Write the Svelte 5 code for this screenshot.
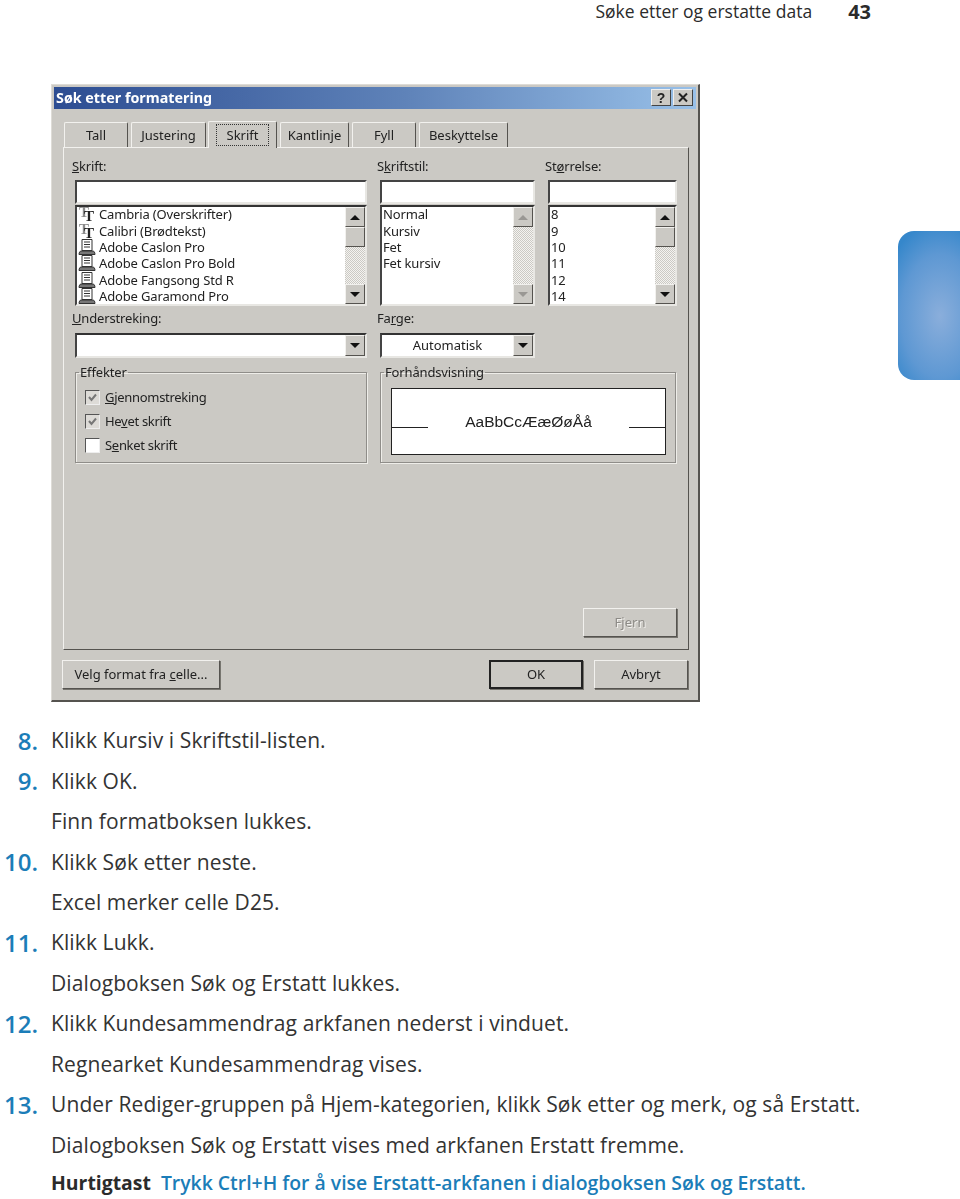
<script>
	const tabs = [
		{ label: 'Tall', width: 64 },
		{ label: 'Justering', width: 75 },
		{ label: 'Skrift', width: 69 },
		{ label: 'Kantlinje', width: 69 },
		{ label: 'Fyll', width: 64 },
		{ label: 'Beskyttelse', width: 89 }
	];
	const fonts = [
		{ name: 'Cambria (Overskrifter)', tt: true },
		{ name: 'Calibri (Brødtekst)', tt: true },
		{ name: 'Adobe Caslon Pro' },
		{ name: 'Adobe Caslon Pro Bold' },
		{ name: 'Adobe Fangsong Std R' },
		{ name: 'Adobe Garamond Pro' }
	];
	const styles = ['Normal', 'Kursiv', 'Fet', 'Fet kursiv'];
	const sizes = ['8', '9', '10', '11', '12', '14'];
	const effects = [
		{ before: '', key: 'G', after: 'jennomstreking', on: true },
		{ before: 'He', key: 'v', after: 'et skrift', on: true },
		{ before: 'S', key: 'e', after: 'nket skrift', on: false }
	];
	const steps = [
		{ n: '8.', text: 'Klikk Kursiv i Skriftstil-listen.' },
		{ n: '9.', text: 'Klikk OK.' },
		{ text: 'Finn formatboksen lukkes.' },
		{ n: '10.', text: 'Klikk Søk etter neste.' },
		{ text: 'Excel merker celle D25.' },
		{ n: '11.', text: 'Klikk Lukk.' },
		{ text: 'Dialogboksen Søk og Erstatt lukkes.' },
		{ n: '12.', text: 'Klikk Kundesammendrag arkfanen nederst i vinduet.' },
		{ text: 'Regnearket Kundesammendrag vises.' },
		{ n: '13.', text: 'Under Rediger-gruppen på Hjem-kategorien, klikk Søk etter og merk, og så Erstatt.' },
		{ text: 'Dialogboksen Søk og Erstatt vises med arkfanen Erstatt fremme.' }
	];
</script>

{#snippet scrollbar(disabled)}
	<div class="scrollbar" class:disabled>
		<div class="sb-btn"><span class="arrow up"></span></div>
		{#if !disabled}<div class="sb-btn thumb"></div>{/if}
		<div class="track"></div>
		<div class="sb-btn"><span class="arrow down"></span></div>
	</div>
{/snippet}

<div class="page">
	<header>
		<span class="running">Søke etter og erstatte data</span>
		<span class="folio">43</span>
	</header>

	<div class="side-tab"></div>

	<div class="dialog">
		<div class="titlebar">
			<span>Søk etter formatering</span>
			<div class="caption">
				<div class="cap-btn help">?</div>
				<div class="cap-btn close">
					<svg width="12" height="11" viewBox="0 0 12 11"><path d="M2 1.5l8 8M10 1.5l-8 8" stroke="#222" stroke-width="2" fill="none" /></svg>
				</div>
			</div>
		</div>

		<div class="tabs">
			{#each tabs as tab}
				<div class="tab" class:active={tab.label === 'Skrift'} style="width: {tab.width}px">
					{#if tab.label === 'Skrift'}<span class="focus">{tab.label}</span>{:else}{tab.label}{/if}
				</div>
			{/each}
		</div>

		<div class="panel">
			<div class="fields">
				<div class="col">
					<div class="label"><u>S</u>krift:</div>
					<div class="input"></div>
					<div class="list">
						<div class="rows">
							{#each fonts as f}
								<div class="row">
									{#if f.tt}
										<svg class="ficon" width="18" height="16" viewBox="0 0 18 16">
											<text x="1" y="11" font-family="Liberation Serif" font-size="15" font-weight="bold" fill="#8c8c8c">T</text>
											<text x="6" y="15" font-family="Liberation Serif" font-size="15" font-weight="bold" fill="#222">T</text>
										</svg>
									{:else}
										<svg class="ficon" width="18" height="16" viewBox="0 0 18 16" fill="none" stroke="#333">
											<path d="M4 .5h10v11H4zM6 3h6M6 5.500h6M6 8h6" />
											<path d="M1 15.500c0-2 1-3.500 2-3.500h12c1 0 2 1.500 2 3.500z" fill="#777" />
										</svg>
									{/if}
									{f.name}
								</div>
							{/each}
						</div>
						{@render scrollbar(false)}
					</div>
				</div>
				<div class="col">
					<div class="label">S<u>k</u>riftstil:</div>
					<div class="input"></div>
					<div class="list">
						<div class="rows plain">
							{#each styles as s}<div class="row">{s}</div>{/each}
						</div>
						{@render scrollbar(true)}
					</div>
				</div>
				<div class="col">
					<div class="label">St<u>ø</u>rrelse:</div>
					<div class="input"></div>
					<div class="list">
						<div class="rows plain">
							{#each sizes as s}<div class="row">{s}</div>{/each}
						</div>
						{@render scrollbar(false)}
					</div>
				</div>
			</div>

			<div class="lower">
				<div class="col">
					<div class="label"><u>U</u>nderstreking:</div>
					<div class="combo">
						<div class="combo-value"></div>
						<div class="sb-btn"><span class="arrow down"></span></div>
					</div>
				</div>
				<div class="col">
					<div class="label">Fa<u>r</u>ge:</div>
					<div class="combo">
						<div class="combo-value">Automatisk</div>
						<div class="sb-btn"><span class="arrow down"></span></div>
					</div>
				</div>
			</div>

			<div class="groups">
				<fieldset class="effects">
					<legend>Effekter</legend>
					<div class="checks">
						{#each effects as e}
							<div class="check">
								<span class="box" class:on={e.on}>
									{#if e.on}
										<svg width="13" height="13" viewBox="0 0 13 13"><path d="M3 6l2.500 3L10 3.500" stroke="#777" stroke-width="2" fill="none" /></svg>
									{/if}
								</span>
								<span>{e.before}<u>{e.key}</u>{e.after}</span>
							</div>
						{/each}
					</div>
				</fieldset>
				<fieldset class="preview">
					<legend>Forhåndsvisning</legend>
					<div class="sample">
						<span class="rule"></span>
						<span class="sample-text">AaBbCcÆæØøÅå</span>
						<span class="rule"></span>
					</div>
				</fieldset>
			</div>

			<div class="panel-foot">
				<div class="btn dim">Fjern</div>
			</div>
		</div>

		<div class="footer">
			<div class="btn pick"><span>Velg format fra <u>c</u>elle...</span></div>
			<div class="right-btns">
				<div class="btn default">OK</div>
				<div class="btn">Avbryt</div>
			</div>
		</div>
	</div>

	<ol class="steps">
		{#each steps as s}
			<li>
				<span class="num">{s.n ?? ''}</span>
				<span>{s.text}</span>
			</li>
		{/each}
		<li class="tip">
			<span class="num"></span>
			<span><b>Hurtigtast</b><span class="tip-text">Trykk Ctrl+H for å vise Erstatt-arkfanen i dialogboksen Søk og Erstatt.</span></span>
		</li>
	</ol>
</div>

<style>
	:global(body) {
		background: #fff;
	}

	.page {
		position: relative;
		width: 960px;
		height: 1199px;
		overflow: hidden;
		font-family: "Open Sans", "Noto Sans", sans-serif;
		color: #2b2b2b;
	}

	header {
		display: flex;
		justify-content: flex-end;
		align-items: center;
		height: 23px;
		line-height: 23px;
		padding-right: 89px;
		font-size: 17.500px;
	}

	.folio {
		margin-left: 36px;
		font-size: 20px;
		font-weight: 700;
	}

	.side-tab {
		position: absolute;
		top: 231px;
		right: 0;
		width: 62px;
		height: 149px;
		border-radius: 16px 0 0 16px;
		background: radial-gradient(ellipse 60px 95px at 42px 85px, #8aaedb, #5e98d3 65%, #3587cb);
	}

	.dialog {
		box-sizing: border-box;
		width: 649px;
		height: 618px;
		margin: 61px 0 0 51px;
		padding: 2px 2px 0;
		background: #cbc9c4;
		border: 1px solid #dedcd7;
		border-right: 2px solid #55534f;
		border-bottom: 2px solid #55534f;
		font-family: "Noto Sans", sans-serif;
		font-size: 13px;
		color: #222;
		filter: blur(0.4px);
	}

	.titlebar {
		display: flex;
		justify-content: space-between;
		align-items: center;
		box-sizing: border-box;
		height: 22px;
		padding: 0 3px 1px 2px;
		background: linear-gradient(90deg, #2d4d92, #5f83b9 55%, #98c0e8);
		color: #fff;
		font-size: 14.300px;
		font-weight: 700;
	}

	.caption {
		display: flex;
		gap: 2px;
	}

	.cap-btn {
		display: flex;
		align-items: center;
		justify-content: center;
		box-sizing: border-box;
		width: 20px;
		height: 17px;
		background: #cbc9c4;
		border: 1px solid;
		border-color: #eee #444 #444 #eee;
		color: #222;
	}

	.help {
		font-family: "Liberation Sans", sans-serif;
		font-weight: 700;
		font-size: 14px;
	}

	.tabs {
		display: flex;
		align-items: flex-end;
		gap: 3px;
		box-sizing: border-box;
		height: 38px;
		padding-left: 10px;
	}

	.tab {
		display: flex;
		align-items: center;
		justify-content: center;
		box-sizing: border-box;
		height: 25px;
		background: #cbc9c4;
		border: 1px solid;
		border-color: #f2f1ee #55534f transparent #f2f1ee;
		border-bottom: 0;
		border-radius: 2px 2px 0 0;
	}

	.tab.active {
		height: 27px;
		margin-left: -1px;
		margin-bottom: -1px;
		position: relative;
		z-index: 1;
	}

	.focus {
		padding: 1px 10px;
		outline: 1px dotted #333;
	}

	.panel {
		box-sizing: border-box;
		width: 626px;
		height: 503px;
		margin-left: 9px;
		padding: 11px 11px 0;
		border: 1px solid;
		border-color: #f2f1ee #55534f #55534f #f2f1ee;
		display: flex;
		flex-direction: column;
	}

	.fields,
	.lower,
	.groups {
		display: grid;
		grid-template-columns: 292px 155px 129px;
		column-gap: 13px;
	}

	.lower {
		grid-template-columns: 292px 155px;
		margin-top: 5px;
	}

	.groups {
		grid-template-columns: 292px 296px;
		margin-top: 7px;
	}

	.label {
		height: 21px;
		margin-left: -3px;
		line-height: 15px;
		letter-spacing: -0.15px;
	}

	.lower .label {
		height: 22px;
	}

	.input {
		box-sizing: border-box;
		height: 24px;
		background: #fff;
		border: 2px solid;
		border-color: #444 #e8e7e3 #e8e7e3 #444;
	}

	.list {
		display: flex;
		box-sizing: border-box;
		height: 101px;
		margin-top: 1px;
		background: #fff;
		border: 2px solid;
		border-color: #333 #e8e7e3 #e8e7e3 #444;
		overflow: hidden;
	}

	.rows {
		flex: 1;
		margin-top: -1px;
		padding-left: 1px;
		letter-spacing: -0.15px;
	}

	.row {
		display: flex;
		align-items: center;
		gap: 3px;
		height: 16.400px;
		white-space: nowrap;
	}

	.ficon {
		overflow: visible;
	}

	.scrollbar {
		display: flex;
		flex-direction: column;
		width: 20px;
		flex: none;
		background: conic-gradient(#f4f3f0 25%, #cbc9c4 0 50%, #f4f3f0 0 75%, #cbc9c4 0) 0 0 / 2px 2px;
	}

	.track {
		flex: 1;
	}

	.sb-btn {
		display: flex;
		align-items: center;
		justify-content: center;
		box-sizing: border-box;
		width: 20px;
		height: 20px;
		flex: none;
		background: #cbc9c4;
		border: 1px solid;
		border-color: #f2f1ee #55534f #55534f #f2f1ee;
	}

	.arrow {
		width: 0;
		height: 0;
		border: 5px solid transparent;
	}

	.arrow.up {
		border-top: 0;
		border-bottom-color: #111;
	}

	.arrow.down {
		border-bottom: 0;
		border-top-color: #111;
	}

	.disabled .arrow.up {
		border-bottom-color: #9a9894;
	}

	.disabled .arrow.down {
		border-top-color: #9a9894;
	}

	.combo {
		display: flex;
		box-sizing: border-box;
		height: 25px;
		background: #fff;
		border: 2px solid;
		border-color: #333 #e8e7e3 #e8e7e3 #444;
	}

	.combo-value {
		flex: 1;
		display: flex;
		align-items: center;
		justify-content: center;
		padding-bottom: 2px;
	}

	.combo .sb-btn {
		height: 21px;
	}

	fieldset {
		box-sizing: border-box;
		height: 98px;
		margin: 0;
		padding: 0;
		min-width: 0;
		border: 1px solid #8f8d89;
		box-shadow: 1px 1px 0 #eeede9, inset 1px 1px 0 #eeede9;
	}

	legend {
		margin-left: 3px;
		padding: 0 1px;
		line-height: 14px;
		letter-spacing: -0.15px;
	}

	.checks {
		padding: 6px 0 0 9px;
	}

	.check {
		display: flex;
		align-items: center;
		gap: 5px;
		height: 24px;
		letter-spacing: -0.3px;
	}

	.box {
		box-sizing: border-box;
		display: block;
		width: 15px;
		height: 15px;
		background: #fff;
		border: 1px solid;
		border-color: #555 #eee #eee #555;
	}

	.box.on {
		background: #dddbd7;
	}

	.box svg {
		display: block;
	}

	.sample {
		display: flex;
		align-items: center;
		justify-content: space-between;
		box-sizing: border-box;
		height: 67px;
		margin: 9px 9px 0 10px;
		background: #fff;
		border: 1px solid #222;
		font-family: "Liberation Sans", sans-serif;
		font-size: 15.500px;
	}

	.rule {
		width: 36px;
		height: 1px;
		background: #222;
		margin-top: 12px;
	}

	.panel-foot {
		display: flex;
		justify-content: flex-end;
		margin-top: auto;
		padding: 0 0 12px;
	}

	.btn {
		display: flex;
		align-items: center;
		justify-content: center;
		box-sizing: border-box;
		width: 94px;
		height: 29px;
		padding-bottom: 1px;
		border: 1px solid;
		border-color: #f2f1ee #55534f #55534f #f2f1ee;
		box-shadow: 1px 1px 0 #77756f;
	}

	.btn.dim {
		color: #8d8b87;
		text-shadow: 1px 1px 0 #f2f1ee;
	}

	.btn.pick {
		width: 158px;
	}

	.btn.default {
		border: 2px solid #222;
	}

	.footer {
		display: flex;
		justify-content: space-between;
		margin: 10px 8px 0;
	}

	.right-btns {
		display: flex;
		gap: 11px;
	}

	.steps {
		list-style: none;
		margin: 18px 0 0;
		padding: 0;
		font-size: 21px;
		letter-spacing: 0.1px;
		color: #333;
	}

	.steps li {
		display: flex;
		align-items: center;
		height: 40.450px;
		white-space: nowrap;
	}

	.num {
		box-sizing: border-box;
		width: 51px;
		flex: none;
		padding-right: 13px;
		text-align: right;
		color: #1b7db8;
		font-size: 24px;
		font-weight: 600;
		letter-spacing: 0;
	}

	.steps .tip {
		height: 36px;
		font-weight: 600;
		font-size: 19.400px;
		letter-spacing: 0;
	}

	.tip b {
		font-weight: 700;
		color: #2b2b2b;
	}

	.tip-text {
		margin-left: 10px;
		color: #1b7db8;
	}
</style>
